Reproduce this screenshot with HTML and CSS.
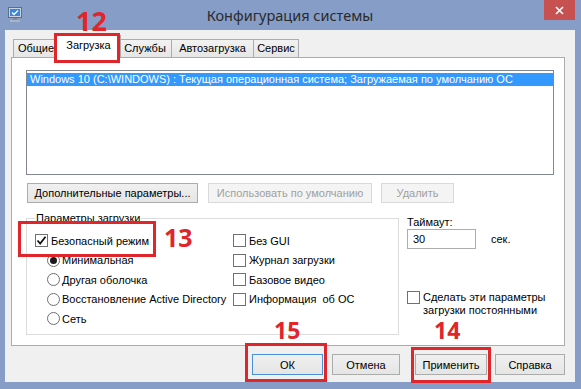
FILE: index.html
```html
<!DOCTYPE html>
<html lang="ru">
<head>
  <meta charset="UTF-8" />
  <title>Конфигурация системы</title>
  <link rel="stylesheet" href="styles.css">
</head>
<body>
  <div class="window">
    <div class="titlebar">
      <svg class="app-icon" width="14" height="16" viewBox="0 0 14 16">
        <rect x="0.5" y="0.5" width="13" height="10" fill="#c9d3e0" stroke="#5d6f88"/>
        <rect x="2" y="2" width="10" height="7" fill="#3b86d8"/>
        <path d="M4 5.5 L6 7.5 L10 3.5" stroke="#fff" stroke-width="1.3" fill="none"/>
        <rect x="5" y="11" width="4" height="2" fill="#7d8a9c"/>
        <rect x="2" y="13" width="10" height="2" fill="#aab4c2"/>
      </svg>
      <div class="title">Конфигурация системы</div>
      <div class="close">
        <svg width="9" height="9" viewBox="0 0 9 9">
          <path d="M1 1 L8 8 M8 1 L1 8" stroke="#fff" stroke-width="1.6"/>
        </svg>
      </div>
    </div>

    <div class="client">
      <div class="tabs">
        <div class="tab tab-general">Общие</div>
        <div class="tab tab-boot active">Загрузка</div>
        <div class="tab tab-services">Службы</div>
        <div class="tab tab-startup">Автозагрузка</div>
        <div class="tab tab-tools">Сервис</div>
      </div>

      <div class="panel">
        <div class="os-list">
          <div class="os-item selected">Windows 10 (C:\WINDOWS) : Текущая операционная система; Загружаемая по умолчанию ОС</div>
        </div>

        <div class="btn-row">
          <button class="btn btn-advanced">Дополнительные параметры...</button>
          <button class="btn btn-default" disabled>Использовать по умолчанию</button>
          <button class="btn btn-delete" disabled>Удалить</button>
        </div>

        <div class="lower">
          <fieldset class="boot-options">
            <legend>Параметры загрузки</legend>
            <div class="options-grid">
              <div class="col">
                <div class="opt"><span class="check checked"><svg width="11" height="11" viewBox="0 0 11 11"><path d="M1.5 5.5 L4.2 8.5 L9.5 1.8" stroke="#111" stroke-width="1.8" fill="none"/></svg></span>Безопасный режим</div>
                <div class="opt sub"><span class="radio on"></span>Минимальная</div>
                <div class="opt sub"><span class="radio"></span>Другая оболочка</div>
                <div class="opt sub"><span class="radio"></span>Восстановление Active Directory</div>
                <div class="opt sub"><span class="radio"></span>Сеть</div>
              </div>
              <div class="col">
                <div class="opt"><span class="check"></span>Без GUI</div>
                <div class="opt"><span class="check"></span>Журнал загрузки</div>
                <div class="opt"><span class="check"></span>Базовое видео</div>
                <div class="opt"><span class="check"></span>Информация&nbsp; об ОС</div>
              </div>
            </div>
          </fieldset>

          <div class="side">
            <div class="timeout-label">Таймаут:</div>
            <div class="timeout-row">
              <div class="textbox">30</div>
              <span class="unit">сек.</span>
            </div>
            <div class="persist">
              <span class="check"></span>
              <span>Сделать эти параметры<br>загрузки постоянными</span>
            </div>
          </div>
        </div>
      </div>

      <div class="footer">
        <button class="btn btn-ok">ОК</button>
        <button class="btn btn-cancel">Отмена</button>
        <button class="btn btn-apply">Применить</button>
        <button class="btn btn-help">Справка</button>
      </div>
    </div>

    <!-- annotation marks -->
    <div class="mark mark-box box-12"></div>
    <div class="mark mark-num num-12">12</div>
    <div class="mark mark-box box-13"></div>
    <div class="mark mark-num num-13">13</div>
    <div class="mark mark-box box-15"></div>
    <div class="mark mark-num num-15">15</div>
    <div class="mark mark-box box-14"></div>
    <div class="mark mark-num num-14">14</div>
  </div>
</body>
</html>
```

FILE: styles.css
```css
* {
  box-sizing: border-box;
}

body {
  margin: 0;
  font-family: "Liberation Sans", Arial, sans-serif;
  font-size: 11px;
  color: #000;
}

.window {
  position: relative;
  width: 581px;
  height: 389px;
  background: #869dc7;
  padding: 0 6px 7px 5px;
  display: flex;
  flex-direction: column;
  overflow: hidden;
}

/* title bar */
.titlebar {
  height: 30px;
  display: grid;
  grid-template-columns: 1fr auto 1fr;
  align-items: start;
}

.app-icon {
  margin: 7px 0 0 3px;
}

.title {
  padding-top: 5px;
  font-family: "Noto Sans", sans-serif;
  font-size: 14.5px;
  color: #2a2a2a;
}

.close {
  justify-self: end;
  width: 31px;
  height: 20px;
  background: #c75050;
  display: flex;
  align-items: center;
  justify-content: center;
}

/* client area */
.client {
  flex: 1;
  background: #f0f0f0;
  padding: 5px 10px 0 6px;
  display: flex;
  flex-direction: column;
}

.tabs {
  height: 22px;
  display: flex;
  align-items: flex-end;
  padding-left: 2px;
}

.tab {
  height: 18px;
  line-height: 17px;
  text-align: center;
  border: 1px solid #acacac;
  border-bottom: none;
  background: linear-gradient(#f2f2f2, #e6e6e6);
  margin-left: -1px;
}

.tab-general { width: 46px; margin-left: 0; }
.tab-boot { width: 65px; }
.tab-services { width: 54px; margin-left: -3px; }
.tab-startup { width: 83px; }
.tab-tools { width: 46px; }

.tab.active {
  height: 23px;
  line-height: 19px;
  margin-left: -3px;
  margin-bottom: -1px;
  background: #fff;
  position: relative;
  z-index: 1;
}

.panel {
  height: 289px;
  background: #fff;
  border: 1px solid #acacac;
  padding: 12px 10px 0 14px;
}

.os-list {
  height: 105px;
  border: 1px solid #828790;
  padding: 2px 0 0 0;
}

.os-item {
  height: 13px;
  line-height: 13px;
  padding-left: 3px;
  white-space: nowrap;
}

.os-item.selected {
  background: #3399ff;
  color: #fff;
}

/* buttons */
.btn {
  font: inherit;
  height: 20px;
  padding: 0;
  border: 1px solid #acacac;
  background: linear-gradient(#f0f0f0, #e5e5e5);
  color: #000;
}

.btn:disabled {
  background: #f4f4f4;
  border-color: #d9d9d9;
  color: #a0a0a0;
}

.btn-row {
  display: flex;
  margin: 8px 0 0 1px;
}

.btn-advanced { width: 171px; }
.btn-default { width: 164px; margin-left: 10px; }
.btn-delete { width: 73px; margin-left: 9px; }

/* lower area */
.lower {
  display: flex;
  margin-top: 9px;
}

.boot-options {
  width: 373px;
  margin: 0;
  padding: 0 0 5px 8px;
  border: 1px solid #dcdcdc;
  min-width: 0;
}

.boot-options legend {
  padding: 0 1px;
  line-height: 13px;
}

.options-grid {
  display: grid;
  grid-template-columns: 198px 1fr;
  margin-top: 6px;
}

.opt {
  height: 19.5px;
  display: flex;
  align-items: center;
  white-space: nowrap;
}

.opt.sub {
  margin-left: 12px;
}

.check {
  width: 13px;
  height: 13px;
  border: 1px solid #707070;
  background: #fff;
  margin-right: 3px;
  flex: none;
  display: flex;
  align-items: center;
  justify-content: center;
}

.radio {
  width: 13px;
  height: 13px;
  border: 1px solid #707070;
  border-radius: 50%;
  background: #fff;
  margin-right: 2px;
  flex: none;
  display: flex;
  align-items: center;
  justify-content: center;
}

.radio.on::after {
  content: "";
  width: 7px;
  height: 7px;
  border-radius: 50%;
  background: #1a1a1a;
}

.side {
  margin-left: 8px;
}

.timeout-label {
  margin-top: 4px;
  line-height: 13px;
}

.timeout-row {
  display: flex;
  align-items: center;
}

.textbox {
  width: 69px;
  height: 20px;
  border: 1px solid #abadb3;
  padding-left: 5px;
  line-height: 18px;
}

.unit {
  margin-left: 15px;
}

.persist {
  display: flex;
  align-items: flex-start;
  margin-top: 42px;
  line-height: 13px;
}

.persist .check {
  margin-right: 3px;
}

/* bottom buttons */
.footer {
  display: flex;
  justify-content: flex-end;
  margin-top: 8px;
}

.footer .btn {
  height: 21px;
}

.btn-ok { width: 71px; margin-right: 9px; border-color: #4a90d9; }
.btn-cancel { width: 68px; margin-right: 15px; }
.btn-apply { width: 72px; margin-right: 8px; }
.btn-help { width: 70px; }

/* red annotation marks */
.mark {
  position: absolute;
  z-index: 5;
}

.mark-box {
  border: 3px solid #e0252b;
}

.mark-num {
  font-family: "Open Sans", sans-serif;
  font-weight: 700;
  color: #e0252b;
  line-height: 17px;
}

.box-12 { left: 54px; top: 33px; width: 66px; height: 30px; }
.num-12 { left: 76px; top: 11px; font-size: 27px; line-height: 20px; }

.box-13 { left: 18px; top: 221px; width: 138px; height: 36px; }
.num-13 { left: 164px; top: 228px; font-size: 25px; line-height: 18px; }

.box-15 { left: 245px; top: 343px; width: 82px; height: 39px; }
.num-15 { left: 274px; top: 322px; font-size: 23px; }

.box-14 { left: 411px; top: 347px; width: 80px; height: 36px; }
.num-14 { left: 434px; top: 322px; font-size: 23px; }
```
